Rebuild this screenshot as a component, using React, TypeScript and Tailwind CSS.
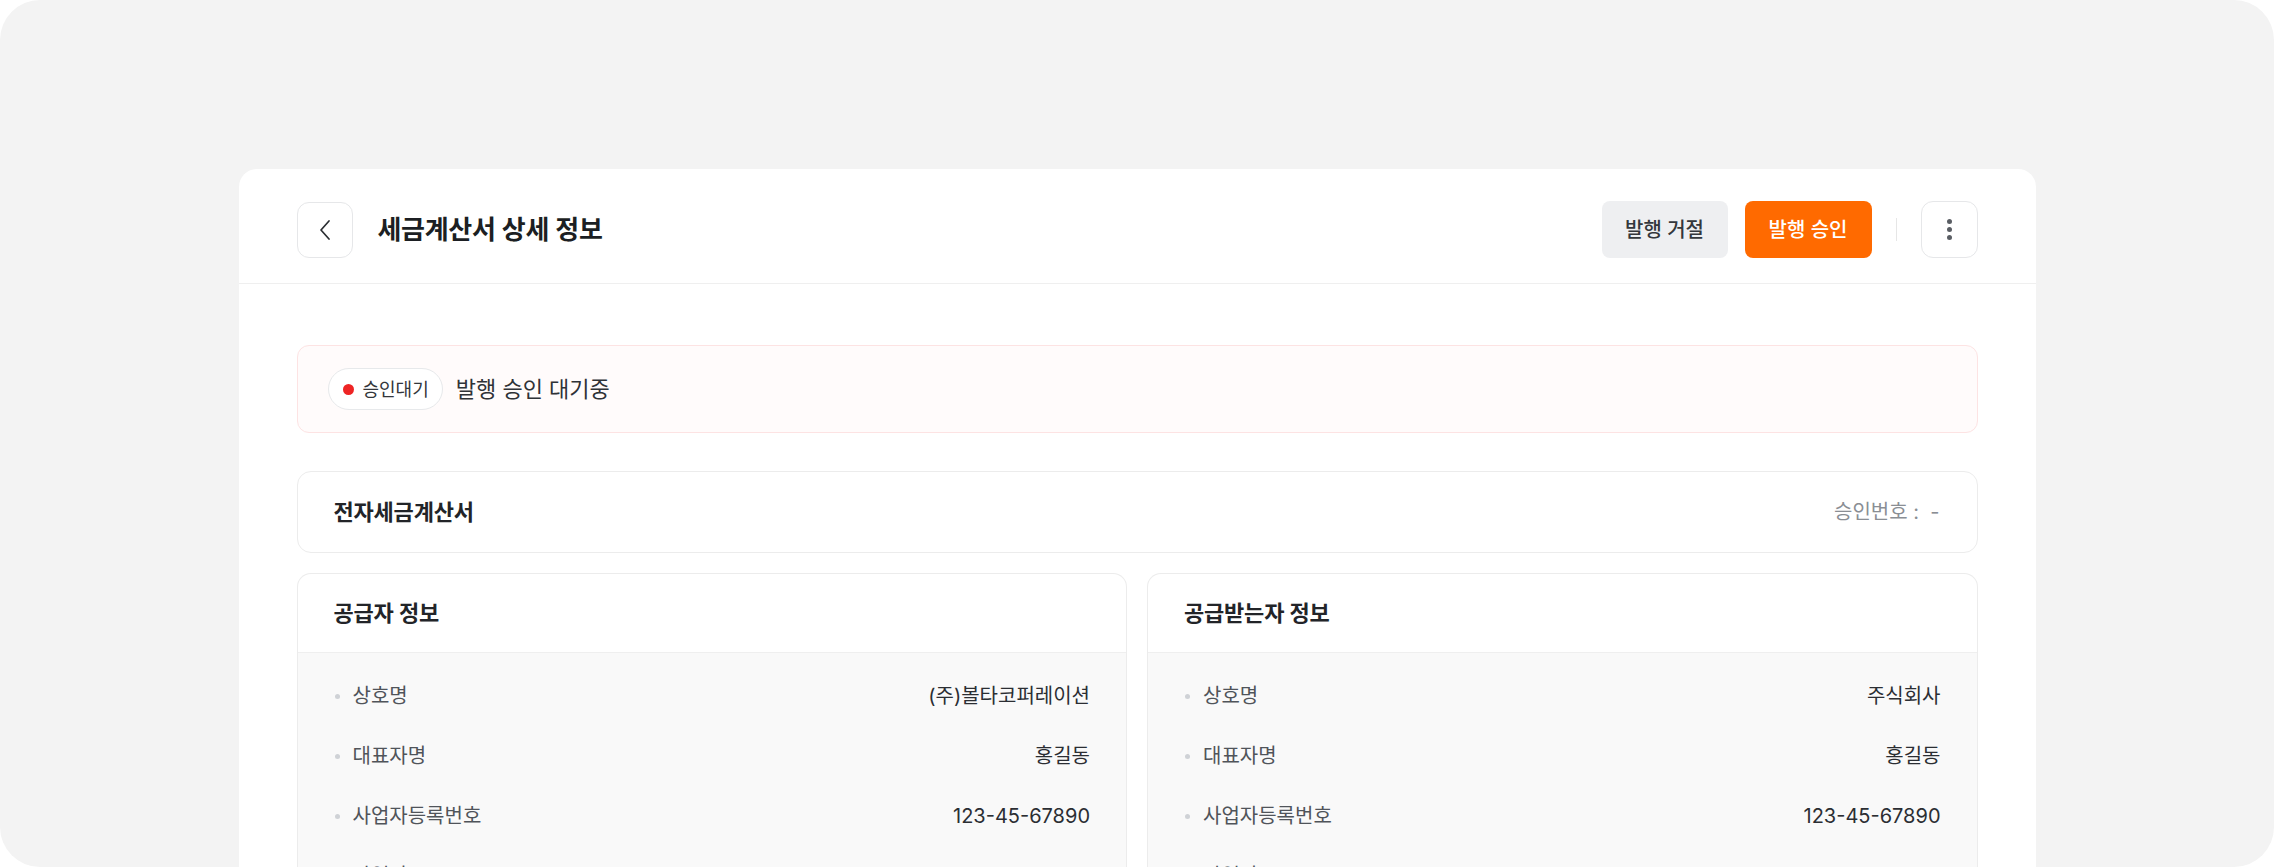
interface Row {
  label: string
  value: string
}

const SUPPLIER: Row[] = [
  { label: '상호명', value: '(주)볼타코퍼레이션' },
  { label: '대표자명', value: '홍길동' },
  { label: '사업자등록번호', value: '123-45-67890' },
  { label: '사업장주소', value: '-' },
]

const BUYER: Row[] = [
  { label: '상호명', value: '주식회사' },
  { label: '대표자명', value: '홍길동' },
  { label: '사업자등록번호', value: '123-45-67890' },
  { label: '사업장주소', value: '-' },
]

function PartyCard({ title, rows }: { title: string; rows: Row[] }) {
  return (
    <div className="rounded-t-[14px] border border-b-0 border-[#ececec] overflow-hidden bg-white">
      <div className="h-[79px] flex items-center px-9 border-b border-[#efefef]">
        <h3 className="text-[22px] font-semibold text-[#222428] tracking-[-0.2px]">{title}</h3>
      </div>
      <div className="bg-[#f9f9f9] pt-[13px] pb-6">
        {rows.map((r) => (
          <div key={r.label} className="h-[60px] flex items-center justify-between pl-[37px] pr-9">
            <div className="flex items-center gap-[13px]">
              <span className="h-[5px] w-[5px] rounded-full bg-[#cfd2d6]" />
              <span className="text-[20px] text-[#50545a]">{r.label}</span>
            </div>
            <span className="text-[20px] text-[#2b2e33]">{r.value}</span>
          </div>
        ))}
      </div>
    </div>
  )
}

export default function App() {
  return (
    <div className="bg-white h-[867px] font-['Inter','Noto_Sans_CJK_KR',sans-serif]">
      <div className="h-[867px] rounded-[40px] bg-[#f3f3f3] overflow-hidden pt-[169px] flex justify-center">
        <div className="w-[1797px] bg-white rounded-t-[18px] h-[760px]">
          {/* 헤더 */}
          <div className="flex items-center justify-between px-[58px] pt-8 pb-[25px] border-b border-[#efefef]">
            <div className="flex items-center gap-[25px]">
              <button className="h-14 w-14 rounded-[12px] border border-[#e6e7e9] flex items-center justify-center">
                <svg width="14" height="22" viewBox="0 0 14 22" fill="none">
                  <polyline points="11,2 3,11 11,20" stroke="#2a2d31" strokeWidth="1.7" strokeLinecap="round" strokeLinejoin="round" />
                </svg>
              </button>
              <h1 className="text-[26px] font-semibold text-[#1c1f23] tracking-[-0.3px]">세금계산서 상세 정보</h1>
            </div>
            <div className="flex items-center">
              <button className="h-[57px] w-[126px] rounded-[8px] bg-[#eeeff1] text-[20px] font-medium text-[#34373c]">
                발행 거절
              </button>
              <button className="ml-[17px] h-[57px] w-[127px] rounded-[8px] bg-[#ff6a00] text-[20px] font-medium text-white">
                발행 승인
              </button>
              <span className="mx-6 h-[23px] w-px bg-[#e6e6e6]" />
              <button className="h-[57px] w-[57px] rounded-[12px] border border-[#e6e7e9] flex flex-col items-center justify-center gap-[3px]">
                <span className="h-[5px] w-[5px] rounded-full bg-[#5a5e64]" />
                <span className="h-[5px] w-[5px] rounded-full bg-[#5a5e64]" />
                <span className="h-[5px] w-[5px] rounded-full bg-[#5a5e64]" />
              </button>
            </div>
          </div>

          {/* 본문 */}
          <div className="px-[58px] pt-[61px]">
            <div className="h-[88px] rounded-[12px] border border-[#fde3e3] bg-[#fffbfb] flex items-center px-[30px] gap-[13px]">
              <span className="h-[42px] pl-[14px] pr-[13px] rounded-full border border-[#e7e9eb] bg-white flex items-center gap-[9px]">
                <span className="h-[11px] w-[11px] rounded-full bg-[#ee2424]" />
                <span className="text-[18px] text-[#33363b]">승인대기</span>
              </span>
              <span className="text-[22px] text-[#2f3237]">발행 승인 대기중</span>
            </div>

            <div className="mt-[38px] h-[82px] rounded-[14px] border border-[#ececec] flex items-center justify-between pl-9 pr-[37px]">
              <h2 className="text-[22px] font-semibold text-[#222428] tracking-[-0.2px]">전자세금계산서</h2>
              <span className="text-[20px] text-[#8a8e94]">승인번호 :&nbsp; -</span>
            </div>

            <div className="mt-5 grid grid-cols-2 gap-5">
              <PartyCard title="공급자 정보" rows={SUPPLIER} />
              <PartyCard title="공급받는자 정보" rows={BUYER} />
            </div>
          </div>
        </div>
      </div>
    </div>
  )
}
